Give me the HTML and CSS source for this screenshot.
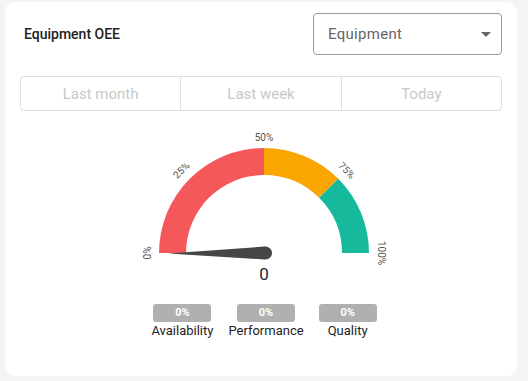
FILE: index.html
```html
<!DOCTYPE html>
<html lang="en">
<head>
  <meta charset="UTF-8">
  <meta name="viewport" content="width=device-width, initial-scale=1.0">
  <title>Equipment OEE</title>
  <link rel="stylesheet" href="styles.css">
</head>
<body>
  <div class="card">
    <div class="card-header">
      <h2 class="card-title">Equipment OEE</h2>
      <div class="select">
        <span>Equipment</span>
        <span class="caret"></span>
      </div>
    </div>

    <div class="range-group">
      <button>Last month</button>
      <button>Last week</button>
      <button>Today</button>
    </div>

    <div class="chart">
      <svg class="gauge" width="260" height="162" viewBox="0 0 260 162">
        <!-- arcs: center 130,132 / outer 105 / inner 78 -->
        <path d="M25 132 A105 105 0 0 1 130 27 L130 54 A78 78 0 0 0 52 132 Z" fill="#f4585b"/>
        <path d="M130 27 A105 105 0 0 1 204.25 57.75 L185.15 76.85 A78 78 0 0 0 130 54 Z" fill="#f9a602"/>
        <path d="M204.25 57.75 A105 105 0 0 1 235 132 L208 132 A78 78 0 0 0 185.15 76.85 Z" fill="#17b99c"/>

        <g class="tick">
          <text x="13" y="132" transform="rotate(-90 13 132)">0%</text>
          <text x="47.3" y="49.3" transform="rotate(-45 47.3 49.3)">25%</text>
          <text x="130" y="16">50%</text>
          <text x="212.7" y="49.3" transform="rotate(45 212.7 49.3)">75%</text>
          <text x="247" y="132" transform="rotate(90 247 132)">100%</text>
        </g>

        <polygon points="34,132.5 131,125.5 131,138.5" fill="#464646"/>
        <circle cx="131.5" cy="132" r="6.5" fill="#464646"/>

        <text class="value" x="130" y="153">0</text>
      </svg>

      <div class="stats">
        <div class="stat">
          <span class="badge">0%</span>
          <span class="stat-label">Availability</span>
        </div>
        <div class="stat">
          <span class="badge">0%</span>
          <span class="stat-label">Performance</span>
        </div>
        <div class="stat">
          <span class="badge">0%</span>
          <span class="stat-label">Quality</span>
        </div>
      </div>
    </div>
  </div>
</body>
</html>
```

FILE: styles.css
```css
body {
  margin: 0;
  background-color: #f4f4f4;
  font-family: Roboto, "Open Sans", sans-serif;
}
.card {
  box-sizing: border-box;
  width: 512px;
  height: 374px;
  margin: 2px 0 0 5px;
  padding: 11px 15px 0 15px;
  background-color: #fff;
  border-radius: 10px;
}
.card-header {
  display: flex;
  align-items: center;
  justify-content: space-between;
}
.card-title {
  margin: 0 0 0 4px;
  font-size: 14px;
  font-weight: 500;
  color: #222;
}
.select {
  box-sizing: border-box;
  width: 189px;
  height: 42px;
  display: flex;
  align-items: center;
  justify-content: space-between;
  padding: 0 10px 0 14px;
  border: 1px solid #999;
  border-radius: 4px;
  font-size: 15px;
  letter-spacing: 0.3px;
  color: #666;
}
.caret {
  width: 0;
  height: 0;
  border-left: 5px solid transparent;
  border-right: 5px solid transparent;
  border-top: 5px solid #666;
}
.range-group {
  display: flex;
  height: 35px;
  margin-top: 21px;
  border: 1px solid #e0e0e0;
  border-radius: 4px;
  box-sizing: border-box;
}
.range-group button {
  flex: 1;
  border: none;
  border-left: 1px solid #e0e0e0;
  background: none;
  font-family: inherit;
  font-size: 15px;
  color: #c8c8c8;
  padding: 0;
}
.range-group button:first-child {
  border-left: none;
}
.chart {
  display: flex;
  flex-direction: column;
  align-items: center;
  padding-left: 6px;
  margin-top: 10px;
}
.gauge {
  display: block;
}
.tick text {
  font-size: 10px;
  fill: #555;
  text-anchor: middle;
  dominant-baseline: central;
}
.value {
  font-size: 17px;
  fill: #1b1f3b;
  text-anchor: middle;
  dominant-baseline: central;
}
.stats {
  display: flex;
  gap: 15px;
  margin-top: 21px;
}
.stat {
  display: flex;
  flex-direction: column;
  align-items: center;
  min-width: 58px;
}
.badge {
  width: 58px;
  height: 18px;
  line-height: 18px;
  text-align: center;
  background-color: #b0b0b0;
  border-radius: 3px;
  color: #fff;
  font-size: 11px;
  font-weight: 700;
}
.stat-label {
  font-size: 13px;
  color: #222;
  line-height: 17px;
}
```
